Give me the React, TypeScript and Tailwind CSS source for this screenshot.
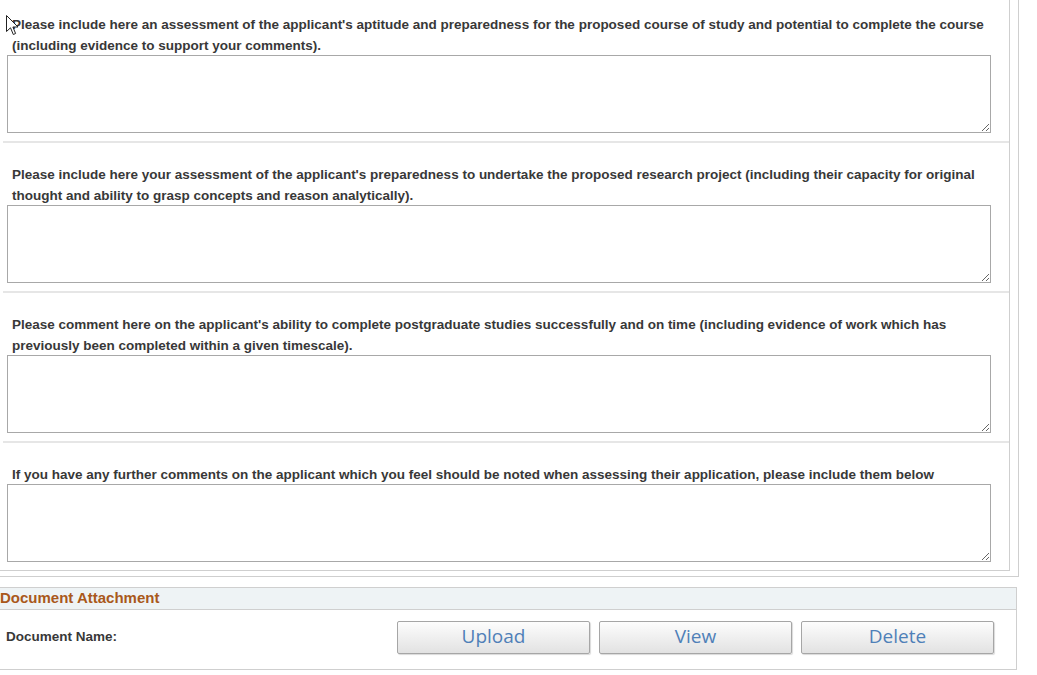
import React from 'react'

const questions = [
    "Please include here an assessment of the applicant's aptitude and preparedness for the proposed course of study and potential to complete the course (including evidence to support your comments).",
    "Please include here your assessment of the applicant's preparedness to undertake the proposed research project (including their capacity for original thought and ability to grasp concepts and reason analytically).",
    "Please comment here on the applicant's ability to complete postgraduate studies successfully and on time (including evidence of work which has previously been completed within a given timescale).",
    "If you have any further comments on the applicant which you feel should be noted when assessing their application, please include them below",
]

const App = () => {
    return (
        <div className="relative min-h-screen bg-white font-['Liberation_Sans',Arial,sans-serif] text-[#383838]">
            {/* mouse pointer */}
            <svg className="absolute left-[6px] top-[15px] z-10" width="13" height="21" viewBox="0 0 13 21">
                <path d="M0.5 0.5 L0.5 16.5 L4.5 12.8 L7.3 19.5 L9.6 18.5 L6.9 12 L12 12 Z" fill="#fff" stroke="#222" strokeWidth="1" />
            </svg>

            <div className="w-[1019px] border-r border-b border-[#cfcfcf] pr-[8px] pb-[5px]">
                <div className="border-r border-b border-[#cfcfcf]">
                    {questions.map((q, i) => (
                        <div
                            key={i}
                            className={
                                i === 0
                                    ? 'ml-[3px] pt-[13px] pb-[8px]'
                                    : 'ml-[3px] border-t-2 border-[#e6e6e6] pt-[20px] pb-[8px]'
                            }
                        >
                            <div className="pl-[9px] pr-[20px] pt-[1px] pb-[0px] text-[13.5px] font-bold leading-[21px] -mb-[1px]">{q}</div>
                            <textarea className="ml-[4px] block h-[78px] w-[984px] border border-[#a8a8a8] bg-white" />
                        </div>
                    ))}
                </div>
            </div>

            <div className="mt-[10px] w-[1017px]">
                <div className="flex h-[23px] items-center border-t border-b border-r border-[#cfcfcf] bg-[#eef3f5] text-[15px] font-bold text-[#a9581b]">
                    Document Attachment
                </div>
                <div className="flex h-[60px] border-r border-b border-[#cfcfcf]">
                    <div className="flex w-[397px] items-center pl-[6px] pb-[4px] text-[13.5px] font-bold">
                        Document Name:
                    </div>
                    <div className="flex gap-[9px] pt-[11px]">
                        {['Upload', 'View', 'Delete'].map((b) => (
                            <button
                                key={b}
                                className="h-[33px] w-[193px] rounded-[2px] border border-[#a6a6a6] bg-gradient-to-b from-[#fdfdfd] to-[#e2e2e2] pb-[2px] font-['Open_Sans',sans-serif] text-[19px] leading-none text-[#4f80b8] shadow-[1px_1px_1px_rgba(0,0,0,0.15)]"
                            >
                                {b}
                            </button>
                        ))}
                    </div>
                </div>
            </div>
        </div>
    )
}

export default App
